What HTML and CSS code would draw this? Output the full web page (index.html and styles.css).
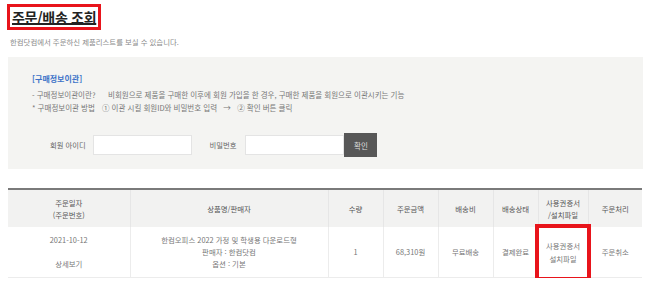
FILE: index.html
```html
<!DOCTYPE html>
<html lang="ko">
<head>
  <meta charset="UTF-8" />
  <title>주문/배송 조회</title>
  <link rel="stylesheet" href="styles.css">
</head>
<body>
  <div class="page">
    <h1 class="title">주문/배송 조회</h1>
    <p class="desc">한컴닷컴에서 주문하신 제품리스트를 보실 수 있습니다.</p>

    <div class="info-box">
      <div class="info-title">[구매정보이관]</div>
      <div class="info-line">
        <span class="info-key">- 구매정보이관이란?</span>
        <span>비회원으로 제품을 구매한 이후에 회원 가입을 한 경우, 구매한 제품을 회원으로 이관시키는 기능</span>
      </div>
      <div class="info-line">
        <span class="info-key short">* 구매정보이관 방법</span>
        <span>① 이관 시킬 회원ID와 비밀번호 입력 &nbsp;&nbsp;→&nbsp;&nbsp; ② 확인 버튼 클릭</span>
      </div>
      <div class="form-row">
        <label class="form-label">회원 아이디</label>
        <input class="form-input" type="text" />
        <label class="form-label pw">비밀번호</label>
        <input class="form-input" type="password" />
        <button class="btn-confirm">확인</button>
      </div>
    </div>

    <table class="orders">
      <colgroup>
        <col style="width:122px"><col style="width:198px"><col style="width:55px"><col style="width:55px">
        <col style="width:55px"><col style="width:45px"><col style="width:50px"><col style="width:54px">
      </colgroup>
      <thead>
        <tr>
          <th>주문일자<br>(주문번호)</th>
          <th>상품명/판매자</th>
          <th>수량</th>
          <th>주문금액</th>
          <th>배송비</th>
          <th>배송상태</th>
          <th>사용권증서<br>/설치파일</th>
          <th>주문처리</th>
        </tr>
      </thead>
      <tbody>
        <tr>
          <td class="date">2021-10-12<br><span class="detail">상세보기</span></td>
          <td class="product">한컴오피스 2022 가정 및 학생용 다운로드형<br>판매자 : 한컴닷컴<br>옵션 : 기본</td>
          <td>1</td>
          <td>68,310원</td>
          <td>무료배송</td>
          <td>결제완료</td>
          <td class="license">사용권증서<br>설치파일</td>
          <td>주문취소</td>
        </tr>
      </tbody>
    </table>
  </div>
</body>
</html>
```

FILE: styles.css
```css
body {
  margin: 0;
  background: #fff;
  font-family: "Noto Sans CJK KR", "Noto Sans", sans-serif;
  color: #666;
}
.page {
  width: 635px;
  padding: 4px 0 0 8px;
}
.title {
  display: inline-block;
  margin: 0 0 0 -1px;
  padding: 0 2px;
  border: 3px solid #e8141b;
  font-size: 14px;
  line-height: 20px;
  font-weight: bold;
  letter-spacing: -0.3px;
  color: #222;
  text-decoration: underline;
  text-decoration-thickness: 2px;
  text-underline-offset: 0px;
}
.desc {
  margin: 6px 0 0 2px;
  font-size: 7.4px;
  line-height: 11px;
  color: #8a8a8a;
}
.info-box {
  margin-top: 10px;
  height: 112px;
  box-sizing: border-box;
  padding: 17px 0 0 24px;
  background: #f4f4f2;
  font-size: 7.5px;
  color: #777;
}
.info-title {
  font-size: 8px;
  line-height: 10px;
  font-weight: bold;
  color: #3c72c8;
  margin-bottom: 4px;
}
.info-line {
  line-height: 13px;
  display: flex;
}
.info-key {
  width: 76px;
}
.info-key.short {
  width: 70px;
}
.form-row {
  display: flex;
  align-items: center;
  margin: 19px 0 0 18px;
  height: 24px;
}
.form-label {
  font-size: 7.3px;
  color: #666;
  margin-right: 7px;
}
.form-label.pw {
  margin-left: 18px;
  margin-right: 9px;
}
.form-input {
  width: 99px;
  height: 20px;
  box-sizing: border-box;
  border: 1px solid #e4e4e4;
  background: #fff;
  padding: 0;
  margin: 0;
}
.btn-confirm {
  width: 33px;
  height: 24px;
  border: none;
  margin: 0;
  background: #575757;
  color: #ddd;
  font-family: inherit;
  font-size: 7.5px;
  padding: 0;
}
.orders {
  margin-top: 19px;
  width: 634px;
  border-collapse: collapse;
  table-layout: fixed;
  border-top: 2px solid #7a7a7a;
  font-size: 7.4px;
}
.orders th {
  height: 37px;
  background: #f2f2f1;
  color: #555;
  font-weight: normal;
  line-height: 12px;
  border-left: 1px solid #e6e6e6;
  padding: 0;
}
.orders td {
  height: 50px;
  border-left: 1px solid #ececec;
  border-bottom: 1px solid #ececec;
  text-align: center;
  color: #777;
  padding: 0;
  line-height: 12px;
}
.orders th:first-child,
.orders td:first-child {
  border-left: none;
}
.detail {
  display: inline-block;
  margin-top: 12px;
}
.orders td.license {
  line-height: 13px;
  outline: 4px solid #e8141b;
  outline-offset: -1px;
}
```
